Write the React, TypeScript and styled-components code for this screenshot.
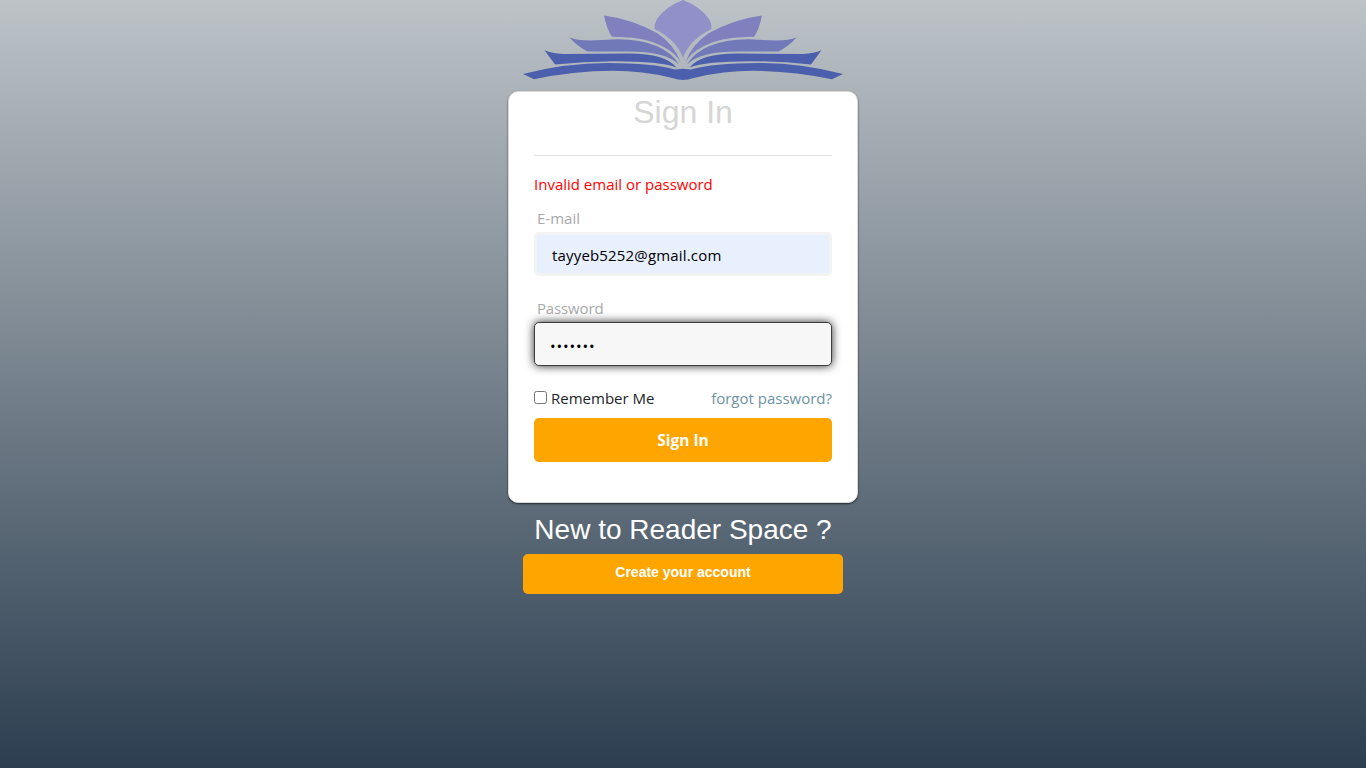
import React from "react";
import styled, { createGlobalStyle } from "styled-components";

const GlobalStyle = createGlobalStyle`
  *, *::before, *::after { box-sizing: border-box; }
  html, body { margin: 0; }
  body { font-family: "Open Sans", "Noto Sans", sans-serif; font-size: 15px; }
`;

const Page = styled.main`
  display: flex;
  flex-direction: column;
  align-items: center;
  height: 100vh;
  overflow: hidden;
  background: linear-gradient(#bdc3c7, #2c3e50);
`;

const Logo = styled.svg`
  display: block;
  flex: none;
  width: 320px;
  height: 80px;
`;

const Card = styled.form`
  display: flex;
  flex-direction: column;
  flex: none;
  width: 350px;
  height: 412px;
  margin-top: 11px;
  padding: 0 25px;
  border: 1px solid #d9d9d9;
  border-radius: 10px;
  background: #fff;
  box-shadow: 0 1px 2px rgba(0, 0, 0, 0.65);
`;

const Title = styled.h1`
  height: 64px;
  margin: 0;
  padding-top: 2px;
  border-bottom: 1px solid #e1e1e1;
  color: #d5d5d5;
  font: 400 32px/37px "Liberation Sans", Arial, sans-serif;
  text-align: center;
`;

const Line = styled.span<{ $fit: number }>`
  letter-spacing: ${(p) => p.$fit}px;
  white-space: nowrap;
`;

const ErrorText = styled.p`
  margin: 16px 0 0;
  color: #ff0000;
  line-height: 24px;
`;

const Field = styled.div<{ $gap: number }>`
  display: flex;
  flex-direction: column;
  margin-top: ${(p) => p.$gap}px;
`;

const Label = styled.label`
  height: 26px;
  padding-left: 3px;
  color: #a9a9a9;
  line-height: 24px;
`;

const Input = styled.input<{ $active?: boolean; $fit?: number }>`
  width: 100%;
  height: 44px;
  margin: 0;
  padding: ${(p) => (p.$active ? "3px 15px 0" : "2px 15px 0")};
  border: ${(p) => (p.$active ? "1px solid #3c3c3c" : "3px solid #f3f3f3")};
  border-radius: 5px;
  outline: none;
  background: ${(p) => (p.$active ? "#f7f7f7" : "#e8effd")};
  box-shadow: ${(p) => (p.$active ? "0 0 10px rgba(0, 0, 0, 0.85)" : "none")};
  color: #000;
  font: inherit;
  letter-spacing: ${(p) => p.$fit ?? 0}px;
`;

const Options = styled.div`
  display: flex;
  align-items: center;
  justify-content: space-between;
  height: 24px;
  margin-top: 20px;
`;

const Remember = styled.label`
  display: flex;
  align-items: center;
  gap: 4px;
  color: #212529;
`;

const Checkbox = styled.input`
  width: 13px;
  height: 13px;
  margin: 0 0 2px;
`;

const Forgot = styled.a`
  color: #6c93a3;
  text-decoration: none;
`;

const Button = styled.button<{ $wide?: boolean }>`
  flex: none;
  width: ${(p) => (p.$wide ? "320px" : "100%")};
  height: ${(p) => (p.$wide ? "40px" : "44px")};
  margin: 8px 0 0;
  padding: ${(p) => (p.$wide ? "0 0 4px" : "0")};
  border: 0;
  border-radius: 5px;
  background: #ffa500;
  color: #fff;
  font: ${(p) =>
    p.$wide
      ? '700 14px "Liberation Sans", Arial, sans-serif'
      : '700 15.5px "Open Sans", sans-serif'};
`;

const Prompt = styled.h2`
  margin: 9px 0 0;
  padding-top: 1px;
  color: #fff;
  font: 400 28px/33px "Liberation Sans", Arial, sans-serif;
  white-space: nowrap;
`;

function Pages() {
  return (
    <>
      <path fill="#8080bf" d="M81 15.5Q108 19 134 33Q152 45 157.5 62.5Q153 53 139 46Q123 37.5 97 37L89 36.7Q84 30 81 15.5Z" />
      <path fill="#7279b9" d="M46.5 37.5Q55 41 73 40.3L95 39.3Q141 40 156 64.5Q143 51.5 105 51.5H64.5Q54 46 46.5 37.5Z" />
      <path fill="#4c5fac" d="M21.5 50.3Q29 53.7 40 53.9L104 53.5Q142 53 153.5 67.5Q137 61 90 61.2Q61 61.5 32 64.5Z" />
      <path fill="#4c5fac" d="M0 74Q42 63 85 63Q130 63 152 69.5L160.2 68.8V80Q156 80 147 77.5Q120 71 90 70.8Q50 71 11 79.3Z" />
    </>
  );
}

function BookLogo() {
  return (
    <Logo viewBox="0 0 320 80" aria-hidden="true">
      <Pages />
      <g transform="matrix(-1 0 0 1 320 0)">
        <Pages />
      </g>
      <path fill="#9190c8" d="M160 0Q178 7 186 19Q189 24 188.5 29Q166 40 160 58Q154 40 131.5 29Q131 24 134 19Q142 7 160 0Z" />
    </Logo>
  );
}

export default function App() {
  return (
    <>
      <GlobalStyle />
      <Page>
        <BookLogo />
        <Card onSubmit={(event) => event.preventDefault()}>
          <Title>Sign In</Title>
          <ErrorText>
            <Line $fit={0}>Invalid email or password</Line>
          </ErrorText>
          <Field $gap={10}>
            <Label htmlFor="email">
              <Line $fit={0}>E-mail</Line>
            </Label>
            <Input id="email" type="text" defaultValue="tayyeb5252@gmail.com" $fit={0.17} />
          </Field>
          <Field $gap={20}>
            <Label htmlFor="password">
              <Line $fit={-0.15}>Password</Line>
            </Label>
            <Input id="password" type="password" defaultValue="reading" $active $fit={0.85} />
          </Field>
          <Options>
            <Remember>
              <Checkbox type="checkbox" />
              <Line $fit={0}>Remember Me</Line>
            </Remember>
            <Forgot href="#">
              <Line $fit={0}>forgot password?</Line>
            </Forgot>
          </Options>
          <Button type="submit">Sign In</Button>
        </Card>
        <Prompt>New to Reader Space ?</Prompt>
        <Button type="button" $wide>
          Create your account
        </Button>
      </Page>
    </>
  );
}
